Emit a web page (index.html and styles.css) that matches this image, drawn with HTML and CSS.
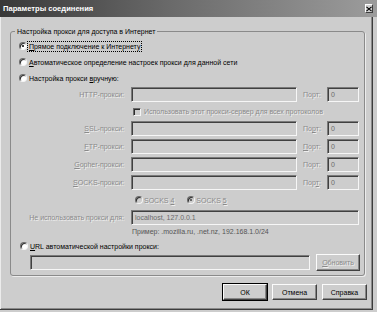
FILE: index.html
```html
<!DOCTYPE html>
<html lang="ru">
<head>
    <meta charset="UTF-8">
    <title>Параметры соединения</title>
    <link rel="stylesheet" href="styles.css">
</head>
<body>
    <div class="window">
        <!-- Заголовок окна -->
        <div class="titlebar">
            <span class="title">Параметры соединения</span>
            <span class="close">
                <svg width="7" height="6" viewBox="0 0 7 6">
                    <path d="M0.5 0.5 L6.5 5.5 M6.5 0.5 L0.5 5.5" stroke="#000" stroke-width="1.4" fill="none"/>
                </svg>
            </span>
        </div>

        <div class="content">
            <div class="group">
                <div class="legend">Настройка прокси для доступа в Интернет</div>

                <div class="opt">
                    <span class="radio checked"></span>
                    <span class="focus"><u>П</u>рямое подключение к Интернету</span>
                </div>
                <div class="opt">
                    <span class="radio"></span>
                    <span><u>А</u>втоматическое определение настроек прокси для данной сети</span>
                </div>
                <div class="opt">
                    <span class="radio"></span>
                    <span>Настройка прокси <u>в</u>ручную:</span>
                </div>

                <!-- Ручная настройка -->
                <div class="proxy-grid">
                    <span class="lbl">HTTP-прокси:</span>
                    <span class="field"></span>
                    <span class="lbl port-lbl">Порт:</span>
                    <span class="field port">0</span>

                    <div class="check-row">
                        <span class="checkbox"></span>
                        <span class="dis">Использовать этот прокси-сервер для всех протоколов</span>
                    </div>

                    <span class="lbl"><u>S</u>SL-прокси:</span>
                    <span class="field"></span>
                    <span class="lbl port-lbl">По<u>р</u>т:</span>
                    <span class="field port">0</span>

                    <span class="lbl"><u>F</u>TP-прокси:</span>
                    <span class="field"></span>
                    <span class="lbl port-lbl"><u>П</u>орт:</span>
                    <span class="field port">0</span>

                    <span class="lbl"><u>G</u>opher-прокси:</span>
                    <span class="field"></span>
                    <span class="lbl port-lbl">Порт:</span>
                    <span class="field port">0</span>

                    <span class="lbl"><u>S</u>OCKS-прокси:</span>
                    <span class="field"></span>
                    <span class="lbl port-lbl">Пор<u>т</u>:</span>
                    <span class="field port">0</span>

                    <div class="socks-row">
                        <span class="radio disabled"></span>
                        <span class="dis socks4">SOCKS <u>4</u></span>
                        <span class="radio disabled checked"></span>
                        <span class="dis">SOCKS <u>5</u></span>
                    </div>

                    <span class="lbl">Не использовать прокси для:</span>
                    <span class="field wide">localhost, 127.0.0.1</span>

                    <div class="example">Пример: .mozilla.ru, .net.nz, 192.168.1.0/24</div>
                </div>

                <div class="opt url-opt">
                    <span class="radio"></span>
                    <span><u>U</u>RL автоматической настройки прокси:</span>
                </div>
                <div class="url-row">
                    <span class="field url"></span>
                    <span class="btn disabled-btn"><u>О</u>бновить</span>
                </div>
            </div>

            <div class="buttons">
                <span class="btn default">ОК</span>
                <span class="btn">Отмена</span>
                <span class="btn">Справка</span>
            </div>
        </div>
    </div>
</body>
</html>
```

FILE: styles.css
```css
/* Окно диалога */
body {
    margin: 0;
    background: #cdcdcd;
    font-family: "Liberation Sans", Arial, sans-serif;
    font-size: 7px;
    color: #000;
}

.window {
    width: 377px;
    height: 312px;
    background: #cdcdcd;
    overflow: hidden;
}

.titlebar {
    height: 17px;
    display: flex;
    align-items: center;
    justify-content: space-between;
    padding: 0 4px 0 3px;
    background: linear-gradient(to right, #383838, #6a6a6a 45%, #9c9c9c);
}

.title {
    color: #fff;
    font-weight: bold;
    font-size: 7.6px;
}

.close {
    width: 8px;
    height: 9px;
    box-sizing: border-box;
    display: flex;
    align-items: center;
    justify-content: center;
    background: #d0d0d0;
    border: 1px solid;
    border-color: #fff #404040 #404040 #fff;
}

.content {
    width: 373px;
    height: 293px;
    box-sizing: border-box;
    padding: 14px 0 0 10px;
    border-right: 1px solid #3c3c3c;
    border-bottom: 1px solid #3c3c3c;
    box-shadow: inset 1px 0 0 #ececec, inset -1px -1px 0 #8a8a8a;
}

/* Группа настроек */
.group {
    width: 355px;
    height: 245px;
    box-sizing: border-box;
    border: 1px solid #8a8a8a;
    border-radius: 3px;
    box-shadow: 1px 1px 0 #ececec;
}

.legend {
    display: table;
    height: 11px;
    line-height: 11px;
    margin: -6px 0 0 4px;
    padding: 0 2px;
    background: #cdcdcd;
}

.opt {
    height: 16px;
    display: flex;
    align-items: center;
    padding-left: 8px;
    gap: 2px;
}

.legend + .opt {
    margin-top: 1px;
}

.focus {
    outline: 1px dotted #000;
    outline-offset: 1px;
}

.radio {
    width: 8px;
    height: 8px;
    box-sizing: border-box;
    border-radius: 50%;
    border: 1px solid;
    border-color: #6a6a6a #f4f4f4 #f4f4f4 #6a6a6a;
    background: #fff;
    box-shadow: inset 1px 1px 0 #2c2c2c;
    position: relative;
    flex: none;
}

.radio.checked::after {
    content: "";
    position: absolute;
    left: 2px;
    top: 2px;
    width: 2px;
    height: 2px;
    border-radius: 50%;
    background: #000;
}

.radio.disabled {
    background: #cdcdcd;
}

.radio.disabled.checked::after {
    background: #444;
}

/* Сетка полей прокси */
.proxy-grid {
    display: grid;
    grid-template-columns: 120px 166px 30px 32px;
    grid-template-rows: 15px 19px 18px 18px 18px 15px 20px 15px 14px;
    margin-top: 1px;
}

.lbl {
    color: #8a8a8a;
    text-shadow: 1px 1px 0 #efefef;
    text-align: right;
    padding-right: 7px;
    line-height: 15px;
    white-space: nowrap;
}

.port-lbl {
    text-align: left;
    padding: 0 0 0 6px;
}

.dis {
    color: #8a8a8a;
    text-shadow: 1px 1px 0 #efefef;
}

.field {
    height: 15px;
    box-sizing: border-box;
    border: 1px solid;
    border-color: #7a7a7a #f6f6f6 #f6f6f6 #7a7a7a;
    box-shadow: inset 1px 1px 0 #404040;
    background: #cdcdcd;
    color: #6a6a6a;
    line-height: 13px;
    padding-left: 3px;
    white-space: nowrap;
}

.field.wide {
    grid-column: 2 / 5;
}

.check-row {
    grid-column: 2 / 5;
    display: flex;
    align-items: center;
    gap: 3px;
    padding-left: 2px;
}

.checkbox {
    width: 8px;
    height: 8px;
    box-sizing: border-box;
    border: 1px solid;
    border-color: #6a6a6a #f4f4f4 #f4f4f4 #6a6a6a;
    box-shadow: inset 1px 1px 0 #2c2c2c;
    background: #cdcdcd;
}

.socks-row {
    grid-column: 2 / 5;
    display: flex;
    align-items: center;
    gap: 1px;
    padding-left: 4px;
}

.socks4 {
    margin-right: 12px;
}

.example {
    grid-column: 2 / 5;
    color: #555;
    padding-left: 1px;
    line-height: 14px;
}

.url-opt {
    height: 14px;
    padding-left: 9px;
}

.url-row {
    display: flex;
    align-items: center;
    gap: 6px;
    margin: 1px 0 0 19px;
    height: 17px;
}

.field.url {
    width: 280px;
}

/* Кнопки */
.btn {
    height: 16px;
    box-sizing: border-box;
    display: flex;
    align-items: center;
    justify-content: center;
    border: 1px solid;
    border-color: #fbfbfb #404040 #404040 #fbfbfb;
    box-shadow: inset -1px -1px 0 #868686;
    background: #cdcdcd;
    width: 45px;
}

.disabled-btn {
    width: 44px;
    height: 17px;
    color: #8a8a8a;
    text-shadow: 1px 1px 0 #efefef;
}

.buttons {
    display: flex;
    justify-content: flex-end;
    gap: 5px;
    margin-top: 8px;
    padding-right: 5px;
}

.btn.default {
    width: 44px;
    outline: 1px solid #000;
    outline-offset: 0;
}
```
